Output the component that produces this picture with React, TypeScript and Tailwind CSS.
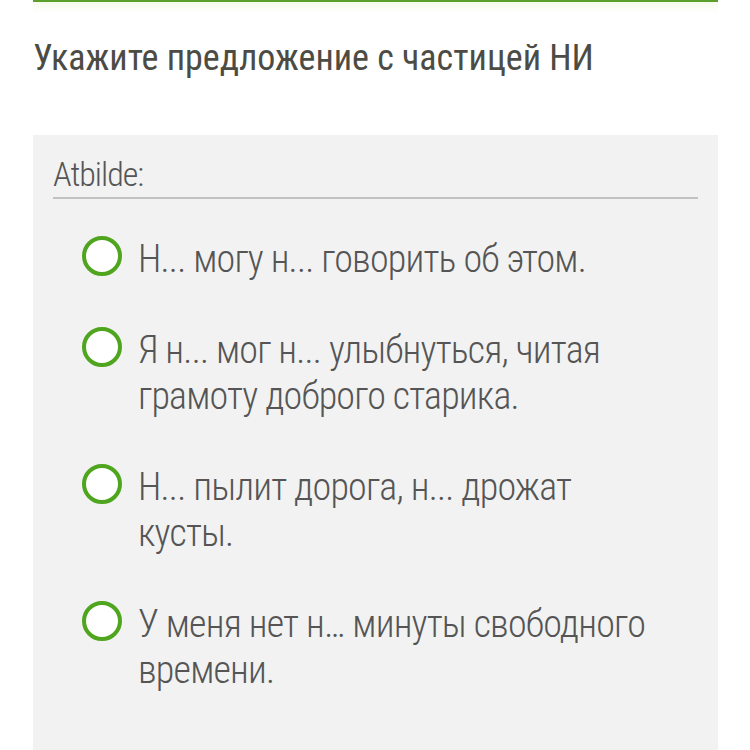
import React, {FC} from "react";

const options: string[] = [
    "Н... могу н... говорить об этом.",
    "Я н... мог н... улыбнуться, читая грамоту доброго старика.",
    "Н... пылит дорога, н... дрожат кусты.",
    "У меня нет н… минуты свободного времени.",
];

const font = {fontFamily: "'Roboto Condensed', Roboto, 'Liberation Sans', sans-serif"} as const;

const Radio: FC = () => (
    <span className="block h-[40px] w-[40px] shrink-0 rounded-full border-[4px] border-[#4fa51e] bg-white"/>
);

const App: FC = () => {
    return (
        <div className="min-h-screen bg-white pl-[33px] pr-[32px]" style={font}>
            <div className="h-[2px] bg-[#5b9f2c]"/>
            <div className="h-[11px] bg-gradient-to-b from-[#f7fbea] to-white"/>
            <h1 className="mt-[23px] text-[36px] leading-[44px] font-normal text-[#4c4c44]">
                Укажите предложение с частицей НИ
            </h1>
            <div className="mt-[55px] bg-[#f2f2f2] px-[20px] pt-[20px] pb-[60px]">
                <div className="border-b-2 border-[#c2c2c2] pb-[4px] text-[34px] leading-[38px] font-light tracking-[-1px] text-[#555555]">
                    Atbilde:
                </div>
                <div className="mt-[37px] flex flex-col gap-[45px] pl-[29px] pr-[30px]">
                    {options.map((o) => (
                        <label key={o} className="flex items-start gap-[16px]">
                            <Radio/>
                            <span className="text-[38px] leading-[46px] font-light tracking-[-0.8px] text-[#555555]">{o}</span>
                        </label>
                    ))}
                </div>
            </div>
        </div>
    );
};

export default App;
